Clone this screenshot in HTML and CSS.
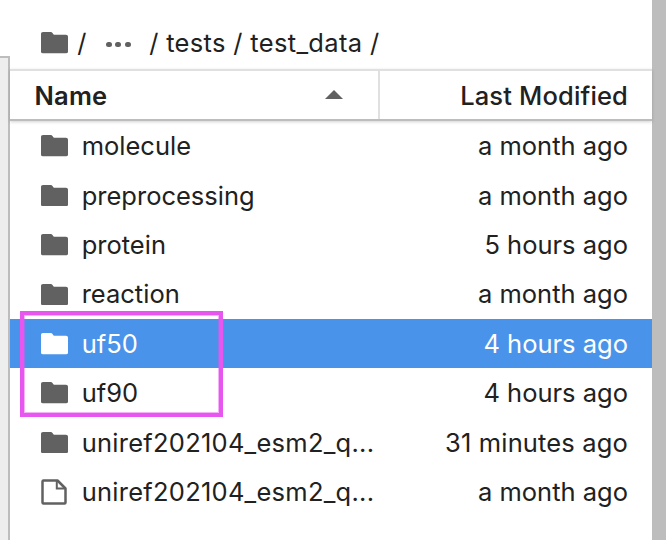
FILE: index.html
```html
<!DOCTYPE html>
<html lang="en">
<head>
<meta charset="utf-8">
<title>test_data</title>
<link rel="stylesheet" href="styles.css">
</head>
<body>
<svg class="sprite" aria-hidden="true">
  <symbol id="folder" viewBox="2 4 20 16" preserveAspectRatio="none"><path d="M9.300 4H3.500C2.500 4 2 4.600 2 5.500v13c0 .9.600 1.500 1.500 1.500h17c.9 0 1.500-.6 1.500-1.500V7.600c0-.9-.6-1.500-1.500-1.500h-9L10.500 4.800Q10 4 9.300 4z"/></symbol>
  <symbol id="file" viewBox="0 0 26 26"><path d="M2.500 1.500H16.500L24.500 9.500V23.500Q24.500 24.500 23.500 24.500H2.500Q1.500 24.500 1.500 23.500V2.500Q1.500 1.500 2.500 1.500Z" fill="none" stroke="currentColor" stroke-width="2.500" stroke-linejoin="round"/><path d="M15.800 1.500V9.500H24" fill="none" stroke="currentColor" stroke-width="2"/></symbol>
</svg>
<div class="app">
  <div class="left-edge"></div>
  <main class="browser">
    <nav class="crumbs"><svg class="folder"><use href="#folder"/></svg><span class="slash">/</span><span class="dots"><i></i><i></i><i></i></span><span class="path">/ tests / test_data /</span></nav>
    <div class="header"><div class="head-name"><span>Name</span><i class="caret"></i></div><div class="head-date">Last Modified</div></div>
    <ul class="list">
      <li><svg class="folder"><use href="#folder"/></svg><span class="name">molecule</span><time>a month ago</time></li>
      <li><svg class="folder"><use href="#folder"/></svg><span class="name">preprocessing</span><time>a month ago</time></li>
      <li><svg class="folder"><use href="#folder"/></svg><span class="name">protein</span><time>5 hours ago</time></li>
      <li><svg class="folder"><use href="#folder"/></svg><span class="name">reaction</span><time>a month ago</time></li>
      <li class="selected"><svg class="folder"><use href="#folder"/></svg><span class="name">uf50</span><time>4 hours ago</time></li>
      <li><svg class="folder"><use href="#folder"/></svg><span class="name">uf90</span><time>4 hours ago</time></li>
      <li><svg class="folder"><use href="#folder"/></svg><span class="name long">uniref202104_esm2_q...</span><time class="minutes">31 minutes ago</time></li>
      <li><svg class="file"><use href="#file"/></svg><span class="name long">uniref202104_esm2_q...</span><time>a month ago</time></li>
    </ul>
    <div class="highlight"></div>
  </main>
  <div class="right-edge"></div>
</div>
</body>
</html>
```
FILE: styles.css
```css
* { box-sizing: border-box; }
body { margin: 0; background: #fff; color: #212121; font: 25.5px/30px Inter, sans-serif; }
.sprite { position: absolute; width: 0; height: 0; }
.app { display: flex; height: 540px; overflow: hidden; }
.left-edge { width: 10px; margin-top: 56px; background: #eee; border-top: 2px solid #bdbdbd; border-right: 2px solid #bdbdbd; }
.browser { position: relative; flex: 1; }
.right-edge { width: 14px; background: #bdbdbd; }
.folder { flex: none; width: 27px; height: 21.5px; color: #616161; fill: currentColor; }
.crumbs { display: flex; align-items: center; height: 69px; padding: 17px 0 0 30.7px; }
.slash { margin-left: 9.5px; }
.dots { display: flex; gap: 3.7px; margin: 3px 18.5px 0 19.5px; }
.dots i { width: 5.8px; height: 5.8px; border-radius: 50%; background: #616161; }
.path { letter-spacing: .33px; }
.header { display: flex; height: 52px; border-top: 2px solid #e0e0e0; border-bottom: 2px solid #bdbdbd; box-shadow: 0 1px 3px rgb(0 0 0 / 18%); font-weight: 500; }
.head-name { display: flex; align-items: center; justify-content: space-between; width: 370px; padding: 2px 35.5px 0 24.5px; border-right: 2px solid #e0e0e0; font-weight: 600; letter-spacing: .2px; }
.caret { margin-top: -3px; border: 9px solid transparent; border-top: 0; border-bottom: 9px solid #616161; }
.head-date { flex: 1; padding: 10px 24px 0 0; text-align: right; letter-spacing: .15px; }
.list { margin: 0; padding: 0; list-style: none; }
.list li { display: flex; align-items: center; height: 49.4px; padding: 1px 24px 0 30.7px; }
.name { margin-left: 14px; }
.long { letter-spacing: .25px; }
.list time { margin-left: auto; }
.list .minutes { letter-spacing: .15px; }
.list .selected { background: #4a93ea; color: #fff; }
.selected .folder { color: #fff; }
.file { flex: none; width: 26px; height: 26px; margin-right: 1px; color: #616161; }
.highlight { position: absolute; left: 10px; top: 311px; width: 203px; height: 106px; border: 4px solid #e756ef; box-shadow: inset 0 0 0 1px rgb(231 86 239 / 45%); }
```
